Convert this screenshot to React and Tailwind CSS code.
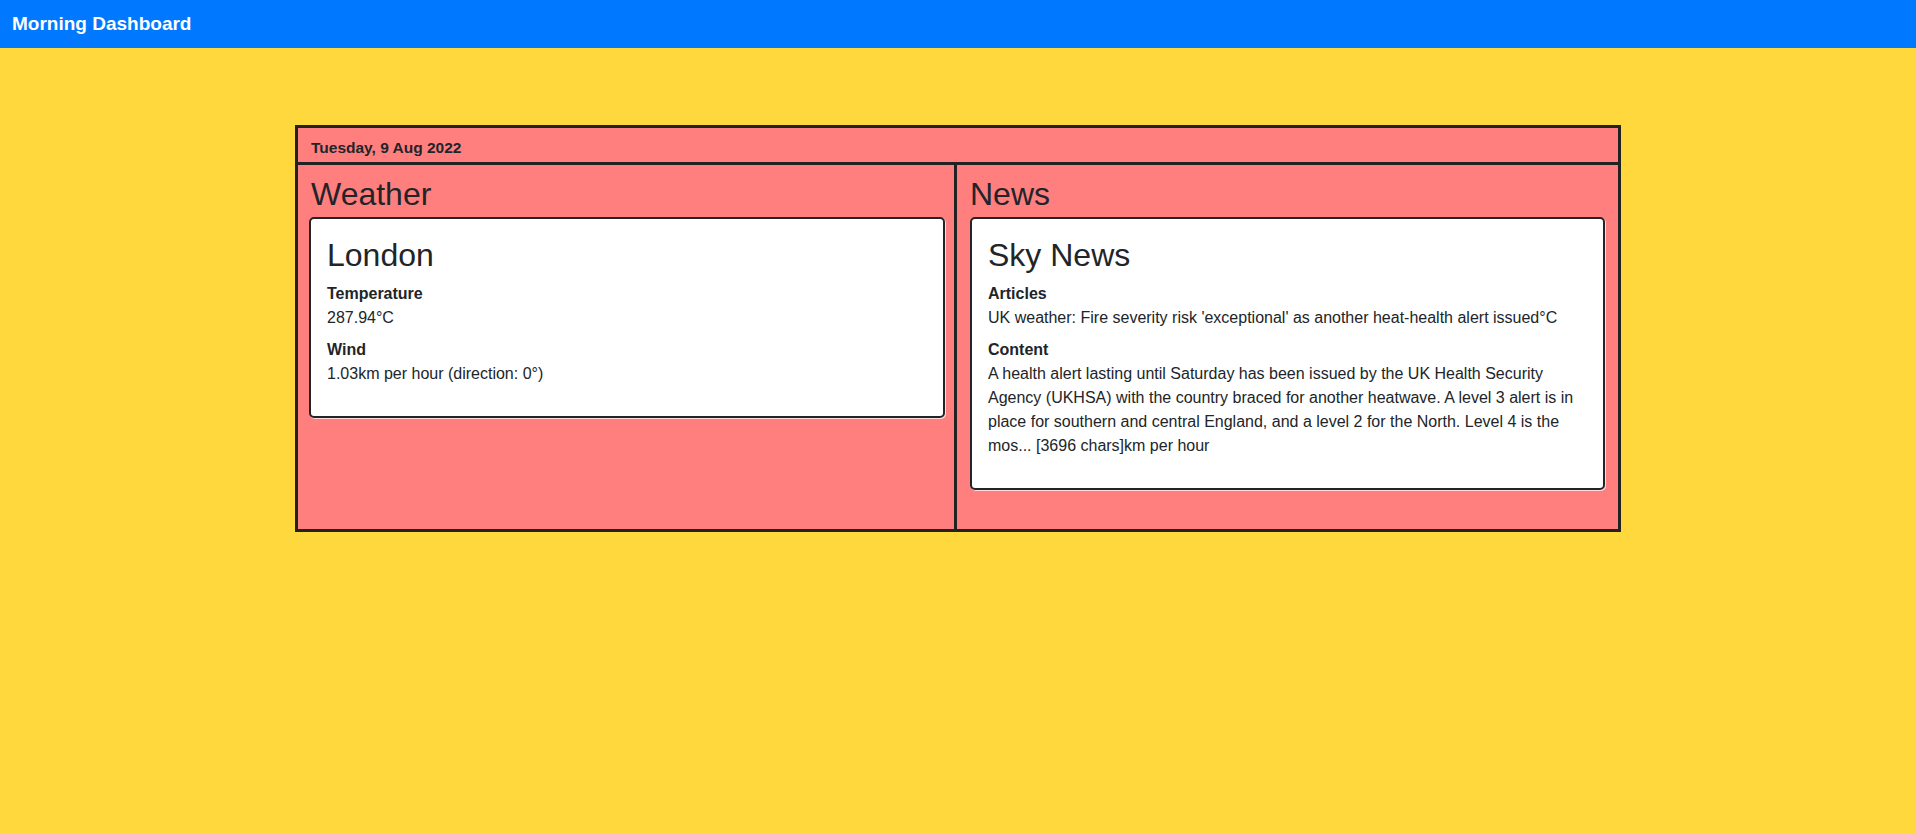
import React from 'react';

const weather = {
  city: 'London',
  temperature: '287.94°C',
  wind: '1.03km per hour (direction: 0°)',
};

const news = {
  source: 'Sky News',
  title: "UK weather: Fire severity risk 'exceptional' as another heat-health alert issued°C",
  content:
    'A health alert lasting until Saturday has been issued by the UK Health Security Agency (UKHSA) with the country braced for another heatwave. A level 3 alert is in place for southern and central England, and a level 2 for the North. Level 4 is the mos... [3696 chars]km per hour',
};

const Field = ({ label, value, last }) => (
  <div className={last ? '' : 'mb-2'}>
    <div className="font-bold text-[16px] leading-[24px]">{label}</div>
    <p className="text-[16px] leading-[24px]">{value}</p>
  </div>
);

const Card = ({ title, children }) => (
  <div className="bg-white border-2 border-[#212529] rounded-[5px] shadow-[1px_1px_0_0_rgba(255,255,255,0.7)] px-4 pt-[17px] pb-[30px]">
    <h2 className="text-[32px] leading-[38px] mb-2">{title}</h2>
    {children}
  </div>
);

export default function App() {
  return (
    <div
      className="min-h-screen bg-[#ffd83d] text-[#212529]"
      style={{ fontFamily: '"Liberation Sans", Arial, sans-serif' }}
    >
      <nav className="h-[48px] bg-[#0078ff] flex items-center px-3">
        <span className="text-white font-bold text-[19px] leading-none pb-[2px]">Morning Dashboard</span>
      </nav>

      <div className="pt-[77px]">
        <div className="w-[1326px] mx-auto border-[3px] border-[#222] bg-[#ff7f7f]">
          {/* date row */}
          <div className="border-b-[3px] border-[#222] pl-[13px] pt-[10px] pb-[4px] text-[15.5px] leading-[20px] font-bold">
            Tuesday, 9 Aug 2022
          </div>

          <div className="grid grid-cols-[656px_1fr]">
            <div className="pl-[11px] pr-[9px] pt-[10px]">
              <h2 className="pl-[2px] text-[32px] leading-[38px] mb-[4px]">Weather</h2>
              <Card title={weather.city}>
                <Field label="Temperature" value={weather.temperature} />
                <Field label="Wind" value={weather.wind} last />
              </Card>
            </div>

            <div className="border-l-[3px] border-[#222] px-[13px] pt-[10px] pb-[39px]">
              <h2 className="text-[32px] leading-[38px] mb-[4px]">News</h2>
              <Card title={news.source}>
                <Field label="Articles" value={news.title} />
                <Field label="Content" value={news.content} last />
              </Card>
            </div>
          </div>
        </div>
      </div>
    </div>
  );
}
